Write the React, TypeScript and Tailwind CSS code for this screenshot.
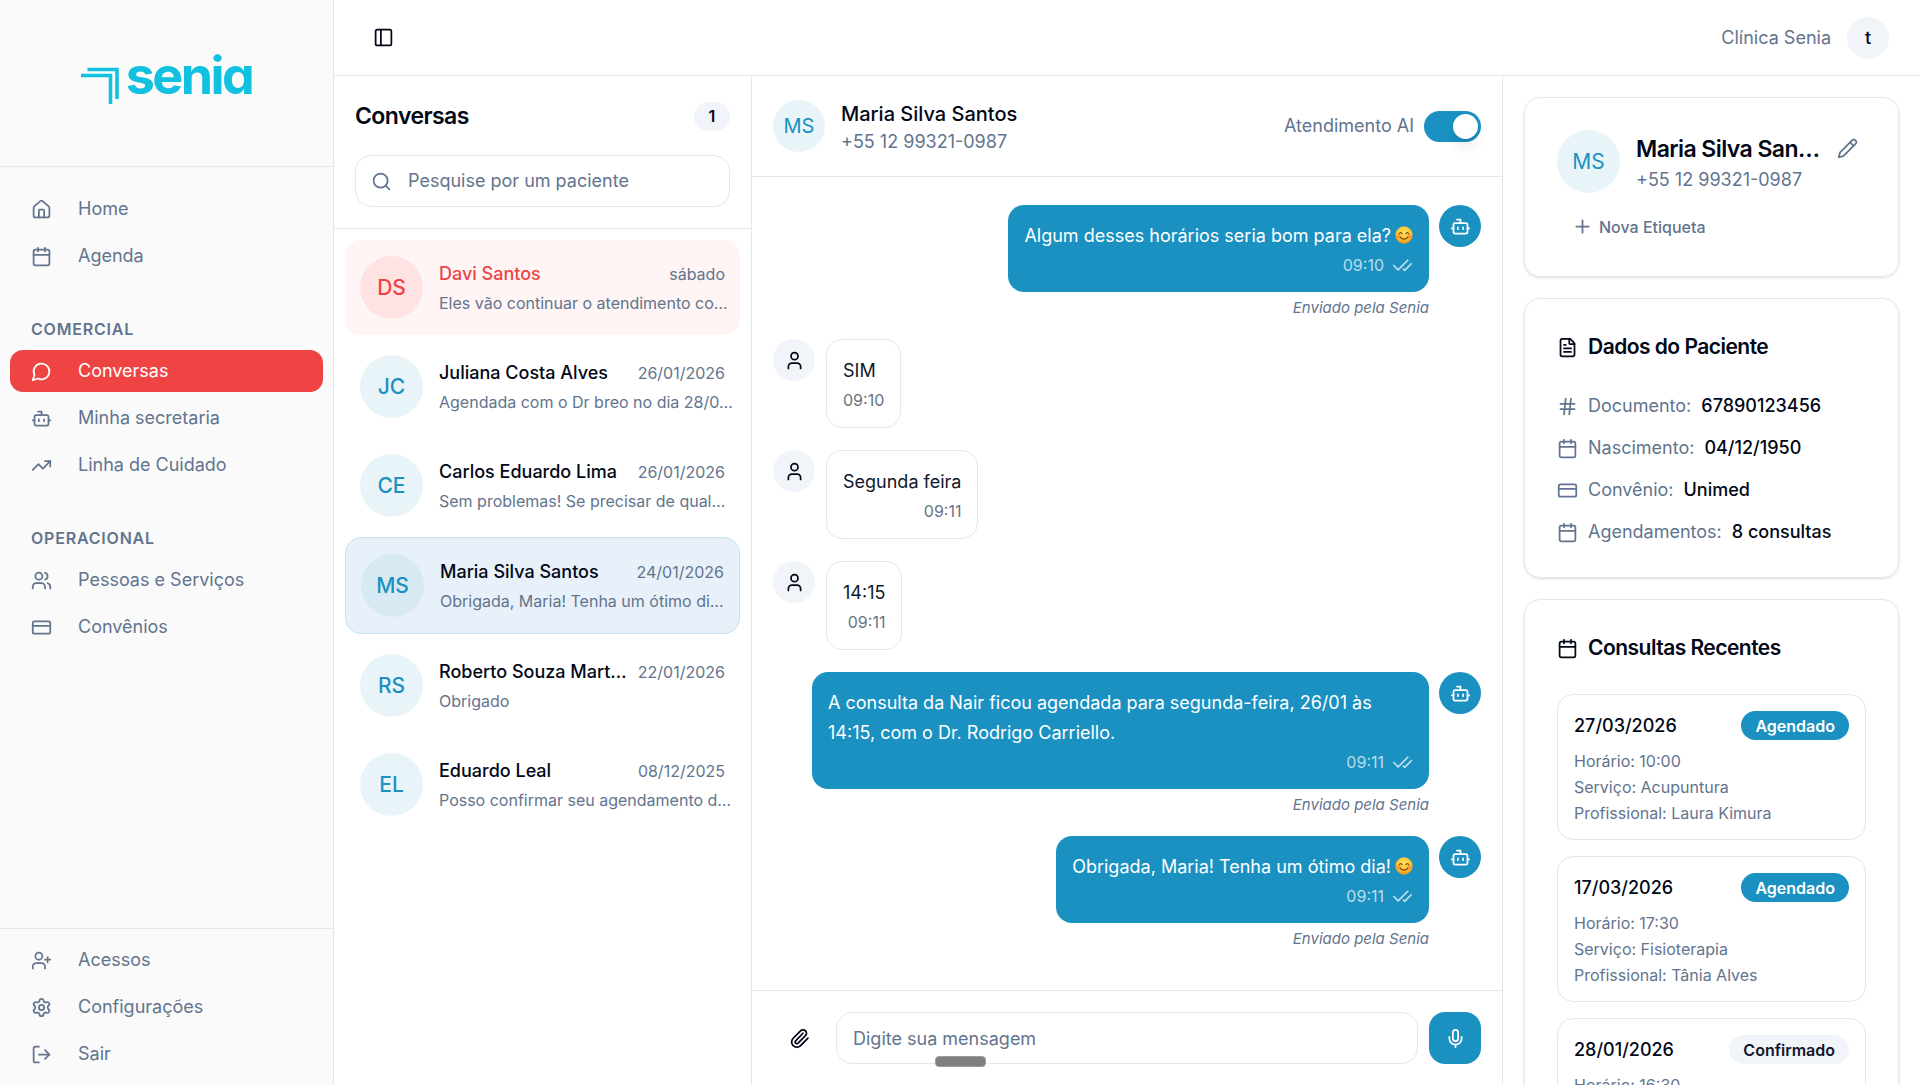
import { useState } from 'react'
import {
  Bot,
  Calendar,
  CheckCheck,
  CreditCard,
  FileText,
  Hash,
  House,
  LogOut,
  Mic,
  PanelLeft,
  Paperclip,
  Pencil,
  Plus,
  Search,
  Settings,
  TrendingUp,
  User,
  UserPlus,
  Users,
} from 'lucide-react'

const MessageCircle = ({ className }: { className?: string }) => (
  <svg
    className={className}
    viewBox="0 0 24 24"
    fill="none"
    stroke="currentColor"
    strokeWidth="2"
    strokeLinecap="round"
    strokeLinejoin="round"
  >
    <path d="M7.9 20A9 9 0 1 0 4 16.1L2 22Z" />
  </svg>
)

const menuPrincipal = [
  { label: 'Home', icon: House },
  { label: 'Agenda', icon: Calendar },
]

const menuComercial = [
  { label: 'Conversas', icon: MessageCircle, active: true },
  { label: 'Minha secretaria', icon: Bot },
  { label: 'Linha de Cuidado', icon: TrendingUp },
]

const menuOperacional = [
  { label: 'Pessoas e Serviços', icon: Users },
  { label: 'Convênios', icon: CreditCard },
]

const menuRodape = [
  { label: 'Acessos', icon: UserPlus },
  { label: 'Configurações', icon: Settings },
  { label: 'Sair', icon: LogOut },
]

const conversas = [
  { id: 1, iniciais: 'DS', nome: 'Davi Santos', data: 'sábado', previa: 'Eles vão continuar o atendimento co…', alerta: true },
  { id: 2, iniciais: 'JC', nome: 'Juliana Costa Alves', data: '26/01/2026', previa: 'Agendada com o Dr breo no dia 28/0…' },
  { id: 3, iniciais: 'CE', nome: 'Carlos Eduardo Lima', data: '26/01/2026', previa: 'Sem problemas! Se precisar de qual…' },
  { id: 4, iniciais: 'MS', nome: 'Maria Silva Santos', data: '24/01/2026', previa: 'Obrigada, Maria! Tenha um ótimo di…' },
  { id: 5, iniciais: 'RS', nome: 'Roberto Souza Mart…', data: '22/01/2026', previa: 'Obrigado' },
  { id: 6, iniciais: 'EL', nome: 'Eduardo Leal', data: '08/12/2025', previa: 'Posso confirmar seu agendamento d…' },
]

const mensagens = [
  { id: 1, senia: true, texto: 'Algum desses horários seria bom para ela?', sorriso: true, hora: '09:10' },
  { id: 2, senia: false, texto: 'SIM', hora: '09:10' },
  { id: 3, senia: false, texto: 'Segunda feira', hora: '09:11' },
  { id: 4, senia: false, texto: '14:15', hora: '09:11' },
  { id: 5, senia: true, texto: 'A consulta da Nair ficou agendada para segunda-feira, 26/01 às 14:15, com o Dr. Rodrigo Carriello.', hora: '09:11' },
  { id: 6, senia: true, texto: 'Obrigada, Maria! Tenha um ótimo dia!', sorriso: true, hora: '09:11' },
]

const dadosPaciente = [
  { icon: Hash, label: 'Documento:', valor: '67890123456' },
  { icon: Calendar, label: 'Nascimento:', valor: '04/12/1950' },
  { icon: CreditCard, label: 'Convênio:', valor: 'Unimed' },
  { icon: Calendar, label: 'Agendamentos:', valor: '8 consultas' },
]

const consultas = [
  { data: '27/03/2026', status: 'Agendado', horario: '10:00', servico: 'Acupuntura', profissional: 'Laura Kimura' },
  { data: '17/03/2026', status: 'Agendado', horario: '17:30', servico: 'Fisioterapia', profissional: 'Tânia Alves' },
  { data: '28/01/2026', status: 'Confirmado', horario: '16:30', servico: 'Fisioterapia', profissional: 'Laura Kimura' },
]

const Sorriso = () => (
  <svg className="inline-block w-[18px] h-[18px] ml-1 mb-1" viewBox="0 0 20 20" role="img" aria-label="😊">
    <defs>
      <radialGradient id="rosto" cx="0.5" cy="0.35" r="0.65">
        <stop offset="0" stopColor="#ffe45c" />
        <stop offset="0.65" stopColor="#fdc02f" />
        <stop offset="1" stopColor="#f0901c" />
      </radialGradient>
    </defs>
    <circle cx="10" cy="10" r="9.6" fill="url(#rosto)" />
    <ellipse cx="4.2" cy="11.5" rx="2.6" ry="2" fill="#f7743a" opacity="0.6" />
    <ellipse cx="15.8" cy="11.5" rx="2.6" ry="2" fill="#f7743a" opacity="0.6" />
    <g fill="none" stroke="#6b3a10" strokeWidth="1.3" strokeLinecap="round">
      <path d="M4.9 8.6Q6.4 5.8 7.9 8.6" />
      <path d="M12.1 8.6Q13.6 5.8 15.1 8.6" />
      <path d="M5.8 12.6Q10 16.8 14.2 12.6" />
    </g>
  </svg>
)

const Logo = () => (
  <div className="flex items-center pb-2 text-[#12c0df]">
    <svg className="w-[39px] h-[52px]" viewBox="0 0 39 52" fill="none" stroke="currentColor" strokeWidth="3.6">
      <path d="M6.5 16.5H36V46" />
      <path d="M0 22.5H29.5V51" />
    </svg>
    <span className="text-[52px] leading-[52px] font-bold tracking-tighter ml-1.5 mb-1.5 [font-feature-settings:'cv11']">
      senia
    </span>
  </div>
)

const NavItem = ({ item }: { item: { label: string; icon: any; active?: boolean } }) => {
  const Icon = item.icon
  return (
    <li>
      <a
        href="#"
        className={`flex items-center h-[42px] rounded-[13px] px-[21px] gap-[26px] ${
          item.active ? 'bg-[#ef4444] text-white' : 'text-slate-500 hover:bg-slate-100'
        }`}
      >
        <Icon className="w-[21px] h-[21px] shrink-0" />
        <span>{item.label}</span>
      </a>
    </li>
  )
}

const NavGroup = ({ titulo, items }: { titulo?: string; items: any[] }) => (
  <div className="px-2.5">
    {titulo && (
      <h2 className="h-[42px] flex items-center px-[21px] text-base font-semibold tracking-wider uppercase text-slate-500">
        {titulo}
      </h2>
    )}
    <ul className="flex flex-col gap-[5px]">
      {items.map((item) => (
        <NavItem key={item.label} item={item} />
      ))}
    </ul>
  </div>
)

const Sidebar = () => (
  <aside className="w-[334px] shrink-0 flex flex-col bg-[#fafafa] border-r border-slate-200">
    <div className="h-[167px] shrink-0 flex items-center justify-center border-b border-slate-200">
      <Logo />
    </div>
    <nav className="flex-1 flex flex-col gap-[31px] pt-[21px]">
      <NavGroup items={menuPrincipal} />
      <NavGroup titulo="Comercial" items={menuComercial} />
      <NavGroup titulo="Operacional" items={menuOperacional} />
    </nav>
    <nav className="border-t border-slate-200 py-2.5">
      <NavGroup items={menuRodape} />
    </nav>
  </aside>
)

const Topbar = () => (
  <header className="h-[76px] shrink-0 flex items-center justify-between border-b border-slate-200 pl-[39px] pr-[31px]">
    <button type="button" aria-label="Alternar menu">
      <PanelLeft className="w-[21px] h-[21px]" />
    </button>
    <div className="flex items-center gap-4">
      <span className="text-slate-500">Clínica Senia</span>
      <button type="button" className="w-[42px] h-[42px] rounded-full bg-slate-100 font-medium">
        t
      </button>
    </div>
  </header>
)

const ListaConversas = () => {
  const [selecionada, setSelecionada] = useState(4)

  return (
    <section className="w-[418px] shrink-0 flex flex-col border-r border-slate-200">
      <div className="flex flex-col gap-[23px] px-[21px] pt-6 pb-[21px] border-b border-slate-200">
        <div className="flex items-center justify-between h-8">
          <h1 className="text-[23px] font-semibold tracking-tight">Conversas</h1>
          <span className="w-9 h-[29px] flex items-center justify-center rounded-full bg-slate-100 text-base font-semibold">
            1
          </span>
        </div>
        <label className="h-[52px] flex items-center gap-4 border border-slate-200 rounded-2xl px-[15px]">
          <Search className="w-[21px] h-[21px] shrink-0 text-slate-500" />
          <input
            type="text"
            aria-label="Pesquise por um paciente"
            placeholder="Pesquise por um paciente"
            className="flex-1 min-w-0 outline-none placeholder:text-slate-500"
          />
        </label>
      </div>
      <ul className="flex flex-col gap-1 px-[11px] py-[11px]">
        {conversas.map((c) => {
          const ativa = c.id === selecionada
          return (
            <li key={c.id}>
              <button
                type="button"
                onClick={() => setSelecionada(c.id)}
                className={`w-full flex items-center gap-4 px-[15px] py-4 text-left rounded-2xl ${
                  ativa ? 'bg-[#e8f1f9] border border-[#c4e3ef]' : c.alerta ? 'bg-[#fff5f4]' : 'hover:bg-slate-50'
                }`}
              >
                <span
                  className={`w-[63px] h-[63px] shrink-0 flex items-center justify-center rounded-full text-[21px] font-medium ${
                    ativa
                      ? 'bg-[#d7eaf3] text-[#1a91c1]'
                      : c.alerta
                        ? 'bg-[#ffe3e3] text-[#ef4444]'
                        : 'bg-[#e9f4f9] text-[#1a91c1]'
                  }`}
                >
                  {c.iniciais}
                </span>
                <span className="flex-1 min-w-0 flex flex-col gap-1">
                  <span className="flex items-center justify-between">
                    <span className={`whitespace-nowrap font-medium ${c.alerta ? 'text-[#ef4444]' : ''}`}>{c.nome}</span>
                    <span className="shrink-0 text-base text-slate-500">{c.data}</span>
                  </span>
                  <span className="whitespace-nowrap text-base text-slate-500">{c.previa}</span>
                </span>
              </button>
            </li>
          )
        })}
      </ul>
    </section>
  )
}

const Mensagem = ({ m }: { m: (typeof mensagens)[number] }) => {
  if (!m.senia) {
    return (
      <div className="flex items-start gap-[11px]">
        <span className="w-[42px] h-[42px] shrink-0 flex items-center justify-center rounded-full bg-slate-100">
          <User className="w-[21px] h-[21px]" />
        </span>
        <div className="flex flex-col gap-1 p-4 border border-gray-200 rounded-2xl text-gray-900">
          <p className="leading-[30px]">{m.texto}</p>
          <time className="self-end text-base leading-[21px] text-gray-500">{m.hora}</time>
        </div>
      </div>
    )
  }

  return (
    <div className="flex items-start justify-end gap-2.5">
      <div className="max-w-[617px] flex flex-col items-end">
        <div className="flex flex-col gap-1 p-4 rounded-2xl bg-[#1a91c1] text-white">
          <p className="leading-[30px]">
            {m.texto}
            {m.sorriso && <Sorriso />}
          </p>
          <span className="self-end flex items-center gap-2 text-base leading-[21px] text-white/70">
            <time>{m.hora}</time>
            <CheckCheck className="w-[21px] h-[21px]" />
          </span>
        </div>
        <span className="pt-1.5 text-[15px] leading-[19px] italic text-slate-500">Enviado pela Senia</span>
      </div>
      <span className="w-[42px] h-[42px] shrink-0 flex items-center justify-center rounded-full bg-[#1a91c1] text-white">
        <Bot className="w-[21px] h-[21px]" />
      </span>
    </div>
  )
}

const Chat = () => {
  const [atendimentoAi, setAtendimentoAi] = useState(true)

  return (
    <section className="flex-1 min-w-0 flex flex-col">
      <header className="h-[101px] shrink-0 flex items-center gap-4 px-[21px] border-b border-slate-200">
        <span className="w-[52px] h-[52px] shrink-0 flex items-center justify-center rounded-full bg-[#e9f4f9] text-[20px] text-[#1a91c1]">
          MS
        </span>
        <div className="flex-1 min-w-0 pt-1">
          <h2 className="text-[20px] leading-7 font-medium truncate">Maria Silva Santos</h2>
          <p className="leading-7 text-slate-500">+55 12 99321-0987</p>
        </div>
        <label className="flex items-center gap-2.5 text-slate-500">
          Atendimento AI
          <input
            type="checkbox"
            role="switch"
            checked={atendimentoAi}
            onChange={(e) => setAtendimentoAi(e.target.checked)}
            className="appearance-none w-[57px] h-[31px] p-[3px] flex rounded-full bg-slate-200 checked:bg-[#1a91c1] checked:justify-end before:w-[25px] before:h-[25px] before:rounded-full before:bg-white before:shadow-lg"
          />
        </label>
      </header>

      <div className="flex-1 min-h-0 overflow-hidden flex flex-col gap-[22px] px-[21px] pt-7">
        {mensagens.map((m) => (
          <Mensagem key={m.id} m={m} />
        ))}
      </div>

      <form
        onSubmit={(e) => e.preventDefault()}
        className="relative shrink-0 flex items-center gap-[11px] px-[21px] py-[21px] border-t border-slate-200"
      >
        <button type="button" aria-label="Anexar arquivo" className="w-[52px] h-[52px] flex items-center justify-center">
          <Paperclip className="w-[21px] h-[21px]" />
        </button>
        <input
          type="text"
          aria-label="Mensagem"
          placeholder="Digite sua mensagem"
          className="flex-1 min-w-0 h-[52px] px-4 border border-slate-200 rounded-2xl outline-none placeholder:text-slate-500"
        />
        <button
          type="button"
          aria-label="Gravar áudio"
          className="w-[52px] h-[52px] flex items-center justify-center rounded-2xl bg-[#1a91c1] text-white"
        >
          <Mic className="w-[21px] h-[21px]" />
        </button>
        <span className="absolute left-[183px] bottom-[18px] w-[51px] h-[11px] rounded bg-[#7f7f7f] border border-[#9c9c9c]" />
      </form>
    </section>
  )
}

const PainelPaciente = () => (
  <aside className="w-[418px] shrink-0 min-h-0 overflow-hidden flex flex-col gap-[21px] p-[21px] border-l border-slate-200">
    <section className="shrink-0 flex flex-col gap-[18px] p-8 border border-slate-200 rounded-2xl shadow-sm">
      <div className="flex items-center gap-4">
        <span className="w-[63px] h-[63px] shrink-0 flex items-center justify-center rounded-full bg-[#e9f4f9] text-[21px] text-[#1a91c1]">
          MS
        </span>
        <div className="flex-1 min-w-0">
          <div className="flex items-center justify-between">
            <h2 className="whitespace-nowrap text-[23px] leading-9 font-semibold tracking-tight">Maria Silva San…</h2>
            <button type="button" aria-label="Editar paciente" className="shrink-0 mr-2 text-slate-500">
              <Pencil className="w-[21px] h-[21px]" />
            </button>
          </div>
          <p className="leading-[26px] text-slate-500">+55 12 99321-0987</p>
        </div>
      </div>
      <button type="button" className="self-start h-[31px] flex items-center gap-1.5 px-[15px] mb-0.5 text-base font-medium text-slate-500">
        <Plus className="w-[21px] h-[21px]" />
        Nova Etiqueta
      </button>
    </section>

    <section className="shrink-0 flex flex-col gap-[30px] p-8 border border-slate-200 rounded-2xl shadow-sm">
      <h3 className="flex items-center gap-2.5 text-[21px] leading-8 font-semibold tracking-tight">
        <FileText className="w-[21px] h-[21px]" />
        Dados do Paciente
      </h3>
      <dl className="flex flex-col gap-4">
        {dadosPaciente.map(({ icon: Icon, label, valor }) => (
          <div key={label} className="flex items-center gap-2.5 leading-[26px]">
            <Icon className="w-[21px] h-[21px] text-slate-500" />
            <dt className="text-slate-500">{label}</dt>
            <dd className="font-medium">{valor}</dd>
          </div>
        ))}
      </dl>
    </section>

    <section className="shrink-0 flex flex-col gap-[30px] p-8 border border-slate-200 rounded-2xl shadow-sm">
      <h3 className="flex items-center gap-2.5 text-[21px] leading-8 font-semibold tracking-tight">
        <Calendar className="w-[21px] h-[21px]" />
        Consultas Recentes
      </h3>
      <ul className="flex flex-col gap-4">
        {consultas.map((c) => (
          <li key={c.data} className="px-4 pt-4 pb-[13px] border border-slate-200 rounded-2xl">
            <div className="flex items-center justify-between mb-2">
              <span className="font-medium">{c.data}</span>
              <span
                className={`h-[29px] flex items-center px-3.5 rounded-full text-base font-semibold ${
                  c.status === 'Agendado' ? 'bg-[#1a91c1] text-white' : 'bg-slate-100 text-slate-900'
                }`}
              >
                {c.status}
              </span>
            </div>
            <p className="text-base leading-[26px] text-slate-500">Horário: {c.horario}</p>
            <p className="text-base leading-[26px] text-slate-500">Serviço: {c.servico}</p>
            <p className="text-base leading-[26px] text-slate-500">Profissional: {c.profissional}</p>
          </li>
        ))}
      </ul>
    </section>
  </aside>
)

export default function App() {
  return (
    <div className="h-screen flex overflow-hidden bg-white font-['Inter',sans-serif] text-lg leading-[26px] text-[#020817]">
      <Sidebar />
      <div className="flex-1 min-w-0 flex flex-col">
        <Topbar />
        <main className="flex-1 min-h-0 flex">
          <ListaConversas />
          <Chat />
          <PainelPaciente />
        </main>
      </div>
    </div>
  )
}
